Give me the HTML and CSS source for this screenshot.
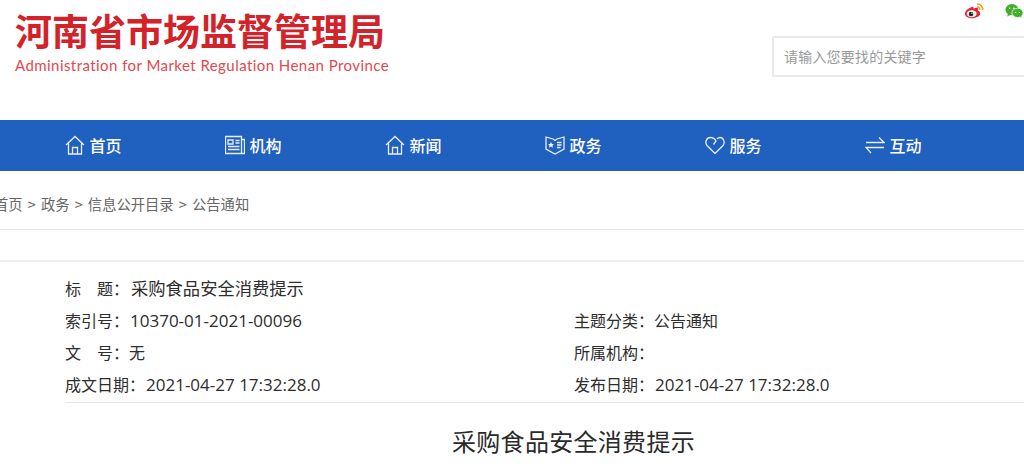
FILE: index.html
```html
<!DOCTYPE html>
<html lang="zh-CN">
<head>
<meta charset="utf-8">
<title>采购食品安全消费提示</title>
<link rel="stylesheet" href="styles.css">
</head>
<body>
<header class="header">
  <div class="brand">
    <div class="brand-cn">河南省市场监督管理局</div>
    <div class="brand-en">Administration for Market Regulation Henan Province</div>
  </div>
  <div class="tools">
    <div class="social">
      <svg class="social-icon" viewBox="0 0 22 18" width="22" height="18" aria-hidden="true">
        <path d="M9 4.600C5 5.300 1 8.800 1 12c0 3 3.700 4.800 7.700 4.800 4.800 0 8.800-2.600 8.800-5.400 0-1.700-1.400-2.400-2.500-2.800.6-1.500.4-2.600-.5-3-1.200-.5-3 .2-4.300.9.300-1.400-.2-2.500-1.700-1.900z" fill="#e6262e"/>
        <ellipse cx="8.300" cy="12" rx="5.300" ry="3.700" fill="#fff"/>
        <circle cx="7.600" cy="12.200" r="2.500" fill="#222"/>
        <circle cx="8.500" cy="11.400" r=".7" fill="#fff"/>
        <path d="M14 1.500a5.500 5.500 0 0 1 6 6.500" fill="none" stroke="#f29a1f" stroke-width="1.600"/>
        <path d="M14 4.800a2.500 2.500 0 0 1 3 3" fill="none" stroke="#f29a1f" stroke-width="1.500"/>
      </svg>
      <svg class="social-icon" viewBox="0 0 20 16" width="20" height="16" aria-hidden="true">
        <ellipse cx="7.500" cy="6.500" rx="7" ry="6" fill="#3fae29"/>
        <path d="M3 10.500 2.500 14l3.500-2z" fill="#3fae29"/>
        <ellipse cx="13.500" cy="10" rx="6" ry="5" fill="#3fae29" stroke="#fff" stroke-width=".8"/>
        <path d="M16 13.500l1.500 2-.2-3z" fill="#3fae29"/>
        <circle cx="5" cy="5" r=".9" fill="#fff"/>
        <circle cx="9.500" cy="5" r=".9" fill="#fff"/>
        <circle cx="11.500" cy="9.500" r=".7" fill="#fff"/>
        <circle cx="15.500" cy="9.500" r=".7" fill="#fff"/>
      </svg>
    </div>
    <div class="search">请输入您要找的关键字</div>
  </div>
</header>

<nav class="nav">
  <a class="nav-item">
    <svg class="nav-icon" viewBox="0 0 20 20" aria-hidden="true"><path d="M1 10 10 1.500 19 10M3.500 8.500V19h13V8.500M7.500 19v-6.500h5V19"/></svg>首页
  </a>
  <a class="nav-item">
    <svg class="nav-icon" viewBox="0 0 20 20" aria-hidden="true"><path d="M.5 1.500h16v17H.5zM16.500 4.500h3v14h-3M3 5h5v4H3zM10.500 5.500h4M10.500 8h4M3 11.500h11.500M3 14.500h11.500"/></svg>机构
  </a>
  <a class="nav-item">
    <svg class="nav-icon" viewBox="0 0 20 20" aria-hidden="true"><path d="M1 10 10 1.500 19 10M3.500 8.500V19h13V8.500M7.500 19v-6.500h5V19"/></svg>新闻
  </a>
  <a class="nav-item">
    <svg class="nav-icon" viewBox="0 0 20 20" aria-hidden="true"><path d="M1 2 8 4l2 1.500L12 4l7-2v12l-9 5-9-5zM12 7.500h4.500M12 10h4.500M12 12.500h3.500"/><path class="nav-fill" d="M6 7l.9 2 2.100.2-1.600 1.400.5 2.100L6 11.600l-1.900 1.100.5-2.100L3 9.200l2.100-.2z"/></svg>政务
  </a>
  <a class="nav-item">
    <svg class="nav-icon" viewBox="0 0 20 20" aria-hidden="true"><path d="M10 18.500 2 10.500C-.5 7.500 1.500 2.500 5.500 2.500c2.500 0 4.500 1.500 5.500 3.500L8.500 9.500M12 4c.8-.9 1.500-1.500 3-1.500 3.500 0 5.500 5 3 8L10 18.500"/></svg>服务
  </a>
  <a class="nav-item">
    <svg class="nav-icon" viewBox="0 0 20 20" aria-hidden="true"><path d="M1 7.500h18L14 2.500M19 12.500H1L6 18"/></svg>互动
  </a>
</nav>

<div class="crumbs">首页 &gt; 政务 &gt; 信息公开目录 &gt; 公告通知</div>
<div class="spacer"></div>

<section class="meta">
  <div class="meta-row"><span class="meta-cell"><span class="wide">标</span>题：<span class="subject">采购食品安全消费提示</span></span></div>
  <div class="meta-row"><span class="meta-cell">索引号：<span class="value">10370-01-2021-00096</span></span><span class="meta-cell meta-cell-end">主题分类：公告通知</span></div>
  <div class="meta-row"><span class="meta-cell"><span class="wide">文</span>号：无</span><span class="meta-cell meta-cell-end">所属机构：</span></div>
  <div class="meta-row"><span class="meta-cell">成文日期：<span class="value">2021-04-27 17:32:28.0</span></span><span class="meta-cell meta-cell-end">发布日期：<span class="value">2021-04-27 17:32:28.0</span></span></div>
</section>

<h1 class="title">采购食品安全消费提示</h1>
</body>
</html>
```
FILE: styles.css
```css
* { box-sizing: border-box; }
html, body { margin: 0; height: 466px; overflow: hidden; }
body {
  background: #fff;
  color: #333;
  font-family: "Microsoft YaHei", "Noto Sans CJK SC", "Noto Sans", sans-serif;
}
.header {
  height: 120px;
  display: flex;
  justify-content: space-between;
  padding-left: 15px;
}
.brand { padding-top: 7px; }
.brand-cn {
  color: #d2232a;
  font-size: 37px;
  line-height: 46px;
  font-weight: 700;
  white-space: nowrap;
}
.brand-en {
  color: #e2484d;
  font-family: "Lato", "Noto Sans", sans-serif;
  font-size: 15px;
  line-height: 18px;
  letter-spacing: .44px;
  margin-top: 3px;
  white-space: nowrap;
}
.tools { width: 252px; }
.social {
  display: flex;
  gap: 21px;
  align-items: center;
  height: 20px;
  margin: 1px 0 15px 192px;
}
.search {
  height: 41px;
  border: 2px solid #e9e9e9;
  border-right: 0;
  padding-left: 10px;
  color: #999;
  font-size: 14px;
  letter-spacing: .2px;
  line-height: 36px;
}
.nav {
  height: 51px;
  background: #2060bf;
  display: flex;
  padding: 0 0 2px 65px;
}
.nav-item {
  width: 160px;
  flex: none;
  display: flex;
  align-items: center;
  gap: 4.500px;
  color: #fff;
  font-size: 16px;
  font-weight: 500;
}
.nav-icon {
  width: 20px;
  height: 20px;
  fill: none;
  stroke: #e6eefb;
  stroke-width: 1.300;
}
.nav-icon .nav-fill { fill: #fff; stroke: none; }
.crumbs {
  height: 59px;
  margin-left: -6px;
  border-bottom: 1px solid #e8e8e8;
  color: #666;
  font-size: 14.300px;
  word-spacing: 2px;
  line-height: 65px;
}
.spacer {
  height: 32px;
  border-bottom: 2px solid #eee;
}
.meta {
  margin-left: 65px;
  padding-top: 10px;
  height: 141px;
  border-bottom: 1px solid #e8e8e8;
  font-size: 16px;
  line-height: 32px;
  color: #2d2d2d;
}
.meta-row { display: flex; height: 32px; }
.meta-cell { width: 509px; flex: none; white-space: nowrap; }
.meta-cell-end { width: 450px; }
.wide { display: inline-block; width: 32px; }
.subject { font-size: 17.300px; margin-left: 2px; }
.value { font-family: "Open Sans", "Noto Sans", sans-serif; font-size: 17px; margin-left: 1px; }
.title {
  margin: 21px 0 0;
  padding-left: 123px;
  text-align: center;
  color: #2a2a2a;
  font-size: 24px;
  letter-spacing: .3px;
  line-height: 34px;
  font-weight: 400;
}
```
